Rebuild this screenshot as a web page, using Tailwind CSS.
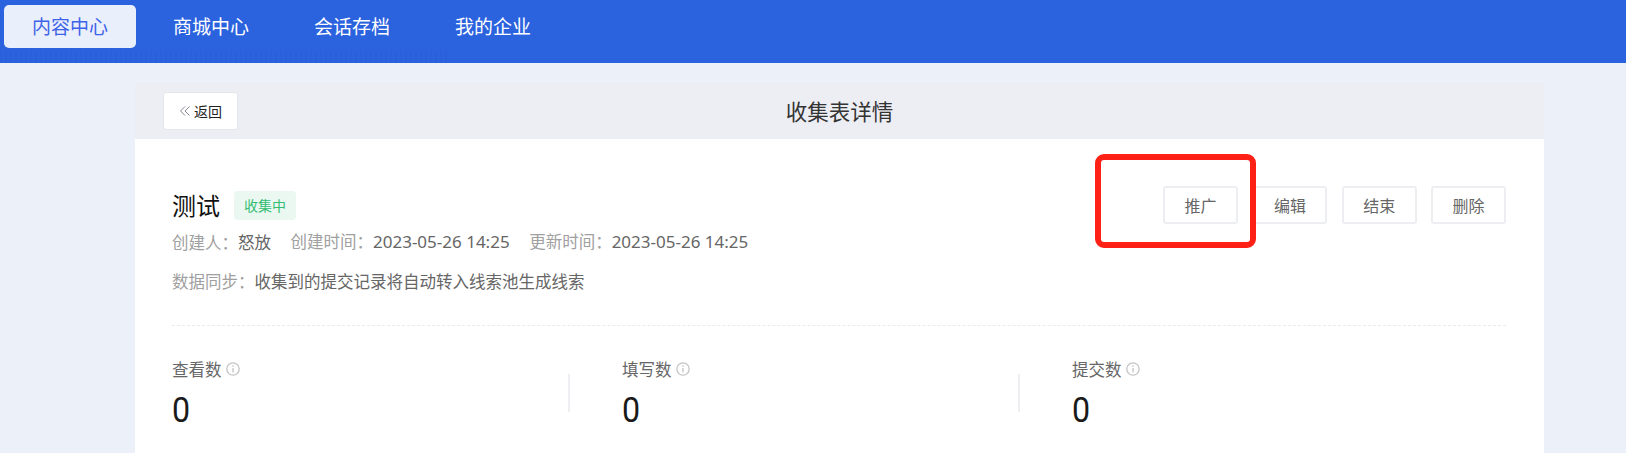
<!DOCTYPE html>
<html lang="zh-CN">
<head>
  <meta charset="UTF-8">
  <title>收集表详情</title>
  <script src="https://cdn.jsdelivr.net/npm/@tailwindcss/browser@4"></script>
</head>
<body class="h-[453px] overflow-hidden bg-[#ecf0f9] font-['Noto_Sans_CJK_SC','Noto_Sans',sans-serif] text-[#333]">
  <!-- Top nav -->
  <nav class="relative flex h-[63px] gap-[9px] bg-[#2b62de] pt-[5px] pl-[4px] text-[19px] text-white">
    <a class="flex h-[43px] w-[132px] items-center justify-center rounded-[5px] bg-[#e9effb] text-[#3f63e8]">内容中心</a>
    <a class="flex h-[43px] w-[132px] items-center justify-center">商城中心</a>
    <a class="flex h-[43px] w-[132px] items-center justify-center">会话存档</a>
    <a class="flex h-[43px] w-[132px] items-center justify-center">我的企业</a>
    <!-- faint noisy strip along the bottom of the bar -->
    <div class="absolute bottom-0 left-0 h-[12px] w-[450px] bg-[repeating-linear-gradient(90deg,#2a5fda_0px,#2a5fda_2px,#2b62de_2px,#2b62de_5px)]"></div>
  </nav>

  <main class="relative mt-[20px] ml-[135px] w-[1409px] bg-white">
    <!-- Title bar -->
    <header class="relative flex h-[56px] items-center justify-center bg-[#edeef3]">
      <button class="absolute top-[9px] left-[28px] flex h-[38px] w-[75px] items-center justify-center gap-[3px] rounded-[3px] border border-[#e4e6eb] bg-white text-[14px] text-[#222]">
        <svg class="h-[12px] w-[12px]" viewBox="0 0 12 12" fill="none" stroke="#858a94" stroke-width="1">
          <path d="M6 1.500 1.500 6 6 10.500M10.500 1.500 6 6l4.500 4.500"/>
        </svg>
        返回
      </button>
      <h1 class="pt-[1px] text-[21.500px] text-[#333]">收集表详情</h1>
    </header>

    <section class="pr-[38px] pl-[37px]">
      <div class="flex items-start justify-between border-b border-dashed border-[#e8eaee] pt-[49px] pb-[32px]">
        <div>
          <div class="flex h-[34px] items-center">
            <h2 class="text-[24px] text-[#111]">测试</h2>
            <span class="ml-[14px] flex h-[29px] w-[62px] items-center justify-center rounded-[4px] bg-[#eaf8f1] text-[14px] text-[#35bd74]">收集中</span>
          </div>
          <p class="mt-[8px] flex h-[24px] items-center gap-[19.500px] text-[16.500px] text-[#666]">
            <span><span class="text-[#a0a0a0]">创建人：</span>怒放</span>
            <span><span class="text-[#a0a0a0]">创建时间：</span><span class="font-['Noto_Sans',sans-serif] text-[17px]">2023-05-26 14:25</span></span>
            <span><span class="text-[#a0a0a0]">更新时间：</span><span class="font-['Noto_Sans',sans-serif] text-[17px]">2023-05-26 14:25</span></span>
          </p>
          <p class="mt-[15px] flex h-[24px] items-center text-[16.500px] text-[#666]">
            <span class="text-[#a0a0a0]">数据同步：</span>收集到的提交记录将自动转入线索池生成线索
          </p>
        </div>
        <div class="mt-[-2px] flex gap-[14.300px] text-[16px] text-[#666]">
          <button class="h-[38px] w-[75px] rounded-[3px] border-2 border-[#eceef1]">推广</button>
          <button class="h-[38px] w-[75px] rounded-[3px] border-2 border-[#eceef1]">编辑</button>
          <button class="h-[38px] w-[75px] rounded-[3px] border-2 border-[#eceef1]">结束</button>
          <button class="h-[38px] w-[75px] rounded-[3px] border-2 border-[#eceef1]">删除</button>
        </div>
      </div>

      <!-- Stats -->
      <div class="grid grid-cols-[450px_450px_1fr] pt-[31px] pb-[40px]">
        <div class="relative">
          <div class="flex h-[24px] items-center gap-[4px] text-[16.500px] text-[#666]">查看数
            <svg class="h-[14px] w-[14px]" viewBox="0 0 14 14" fill="none" stroke="#c4c4c4" stroke-width="1.300"><circle cx="7" cy="7" r="6.200"/><path d="M7 6v4.500M7 3.200v1.500"/></svg>
          </div>
          <div class="mt-[6px] origin-left scale-x-[0.92] font-['Roboto',sans-serif] text-[35px] leading-[48px] text-[#1a1a1a]">0</div>
          <div class="absolute top-[17px] left-[396px] h-[38px] w-[2px] bg-[#eeeef3]"></div>
        </div>
        <div class="relative">
          <div class="flex h-[24px] items-center gap-[4px] text-[16.500px] text-[#666]">填写数
            <svg class="h-[14px] w-[14px]" viewBox="0 0 14 14" fill="none" stroke="#c4c4c4" stroke-width="1.300"><circle cx="7" cy="7" r="6.200"/><path d="M7 6v4.500M7 3.200v1.500"/></svg>
          </div>
          <div class="mt-[6px] origin-left scale-x-[0.92] font-['Roboto',sans-serif] text-[35px] leading-[48px] text-[#1a1a1a]">0</div>
          <div class="absolute top-[17px] left-[396px] h-[38px] w-[2px] bg-[#eeeef3]"></div>
        </div>
        <div>
          <div class="flex h-[24px] items-center gap-[4px] text-[16.500px] text-[#666]">提交数
            <svg class="h-[14px] w-[14px]" viewBox="0 0 14 14" fill="none" stroke="#c4c4c4" stroke-width="1.300"><circle cx="7" cy="7" r="6.200"/><path d="M7 6v4.500M7 3.200v1.500"/></svg>
          </div>
          <div class="mt-[6px] origin-left scale-x-[0.92] font-['Roboto',sans-serif] text-[35px] leading-[48px] text-[#1a1a1a]">0</div>
        </div>
      </div>
    </section>

    <!-- Red annotation drawn over the screenshot -->
    <div class="absolute top-[71px] left-[960px] h-[94px] w-[161px] rounded-[9px] border-[6px] border-[#ff2116]"></div>
  </main>
</body>
</html>
